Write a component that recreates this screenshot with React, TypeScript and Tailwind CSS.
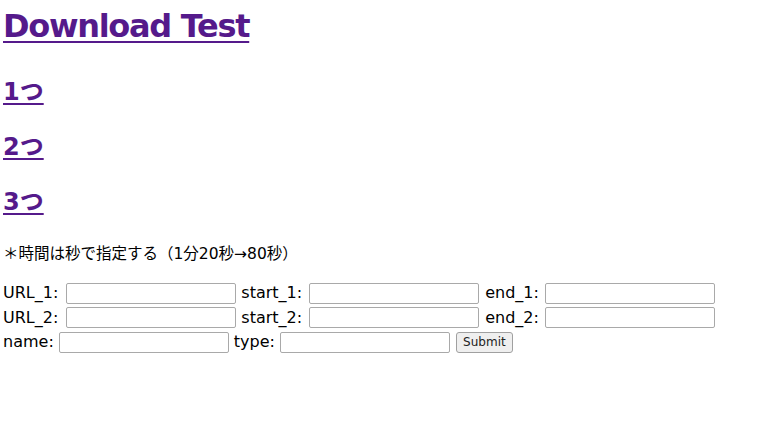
const font = { fontFamily: '"DejaVu Sans", "Noto Sans CJK JP", sans-serif' };

function TextInput() {
  return (
    <input
      type="text"
      className="h-[21px] w-[170px] rounded-[2px] border border-[#a9a9a9] bg-white px-1 text-[13px] outline-none"
    />
  );
}

function Row(props: { n: number }) {
  return (
    <div className="flex h-[24.5px] items-center">
      <span className="mr-[8px]">URL_{props.n}:</span>
      <TextInput />
      <span className="ml-[5px] mr-[7px]">start_{props.n}:</span>
      <TextInput />
      <span className="ml-[6px] mr-[6px]">end_{props.n}:</span>
      <TextInput />
    </div>
  );
}

export default function App() {
  return (
    <div className="min-h-screen bg-white pl-[3px] text-black" style={font}>
      <div className="pt-[6px]">
        <h1 className="text-[32px] font-bold leading-[40px] tracking-[-1.3px] text-[#551a8b]">
          <a href="#" className="underline decoration-[2px] underline-offset-[4px]">Download Test</a>
        </h1>
      </div>
      <div className="mt-[29px] flex flex-col gap-[21px]">
        {['1つ', '2つ', '3つ'].map(t => (
          <h2 key={t} className="h-[34px] text-[24px] font-bold leading-[34px] text-[#551a8b]">
            <a href="#" className="underline decoration-[2px] underline-offset-[3px]">{t}</a>
          </h2>
        ))}
      </div>
      <p className="mt-[24px] text-[15.5px] leading-[22px]">＊時間は秒で指定する（1分20秒→80秒）</p>
      <form className="mt-[16px] flex flex-col text-[16px]" onSubmit={e => e.preventDefault()}>
        <Row n={1} />
        <Row n={2} />
        <div className="flex h-[24px] items-center">
          <span className="mr-[5px]">name:</span>
          <TextInput />
          <span className="ml-[5px] mr-[5px]">type:</span>
          <TextInput />
          <button
            type="submit"
            className="ml-[6px] h-[21px] w-[57px] rounded-[3px] border border-[#a0a0a0] bg-[#efefef] text-[12px] leading-none text-[#222]"
          >
            Submit
          </button>
        </div>
      </form>
    </div>
  );
}
